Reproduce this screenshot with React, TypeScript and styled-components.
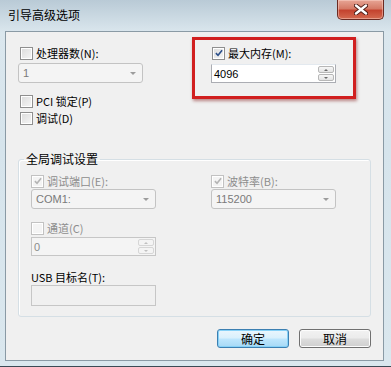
import React from 'react';
import styled, { createGlobalStyle } from 'styled-components';

const GlobalStyle = createGlobalStyle`
  html, body {
    margin: 0;
    padding: 0;
    background: #1d2a33;
  }
  body {
    font-family: "Noto Sans CJK SC", "Liberation Sans", sans-serif;
  }
`;

const cjk = `"Noto Sans CJK SC", "Liberation Sans", sans-serif`;
const latin = `"Liberation Sans", "DejaVu Sans", sans-serif`;

const Window = styled.div`
  position: relative;
  width: 391px;
  height: 367px;
  box-sizing: border-box;
  display: flex;
  flex-direction: column;
  background: linear-gradient(180deg, #b9cad6 0%, #dbe7ee 9%, #d6e4ec 40%, #dae7ee 100%);
  border-bottom: 1px solid #3a4a55;
`;

const TitleBar = styled.div`
  height: 31px;
  display: flex;
  justify-content: space-between;
  align-items: flex-start;
  padding-left: 8px;
  flex-shrink: 0;
`;

const Title = styled.div`
  font-family: ${cjk};
  font-size: 12px;
  line-height: 14px;
  color: #000;
  margin-top: 8px;
`;

const CloseButton = styled.div`
  width: 47px;
  height: 20px;
  margin-right: 7px;
  box-sizing: border-box;
  border: 1px solid #6b2a22;
  border-top: none;
  border-radius: 0 0 5px 5px;
  background: linear-gradient(180deg, #e7a595 0%, #d57a66 45%, #c4432f 55%, #d46a50 100%);
  box-shadow: inset 0 0 0 1px rgba(255, 220, 210, 0.45);
  display: flex;
  align-items: center;
  justify-content: center;
`;

const Client = styled.div`
  position: relative;
  flex: 1;
  margin: 0 7px 5px 5px;
  border: 1px solid #8a9aa5;
  background: #f0f0f0;
  display: flex;
  flex-direction: column;
  padding: 14px 12px 0 12px;
`;

const TopGrid = styled.div`
  display: grid;
  grid-template-columns: 193px 126px;
`;

const Column = styled.div`
  display: flex;
  flex-direction: column;
  align-items: flex-start;
`;

const CheckRow = styled.label<{ $gap?: number; $disabled?: boolean; $indent?: number }>`
  display: flex;
  align-items: center;
  gap: 3px;
  height: 14px;
  margin-top: ${({ $gap }) => $gap ?? 0}px;
  margin-left: ${({ $indent }) => $indent ?? 2}px;
  font-family: ${cjk};
  font-size: 11px;
  color: ${({ $disabled }) => ($disabled ? '#8d8d8d' : '#000')};
  white-space: pre;
`;

const Box = styled.span<{ $disabled?: boolean }>`
  width: 13px;
  height: 13px;
  box-sizing: border-box;
  border: 1px solid ${({ $disabled }) => ($disabled ? '#c2c2c2' : '#8f8f8f')};
  background: ${({ $disabled }) =>
    $disabled ? '#f4f4f4' : 'linear-gradient(135deg, #dcdcdc 0%, #f6f6f6 100%)'};
  box-shadow: inset 0 0 0 1px #fff;
  display: flex;
  align-items: center;
  justify-content: center;
  flex-shrink: 0;
`;

const Combo = styled.div<{ $gap?: number; $disabled?: boolean }>`
  width: 125px;
  height: 20px;
  margin-top: ${({ $gap }) => $gap ?? 0}px;
  box-sizing: border-box;
  border: 1px solid ${({ $disabled }) => ($disabled ? '#c3c3c3' : '#a8a8a8')};
  border-radius: 3px;
  background: ${({ $disabled }) => ($disabled ? '#f4f4f4' : '#fff')};
  display: flex;
  align-items: center;
  justify-content: space-between;
  padding: 0 6px 0 4px;
  font-family: ${latin};
  font-size: 11px;
  color: #7a7a7a;
`;

const Arrow = styled.span`
  width: 0;
  height: 0;
  border-left: 3px solid transparent;
  border-right: 3px solid transparent;
  border-top: 3px solid #9c9c9c;
`;

const Spin = styled.div<{ $gap?: number; $disabled?: boolean }>`
  width: 125px;
  height: 19px;
  margin-top: ${({ $gap }) => $gap ?? 0}px;
  box-sizing: border-box;
  border: 1px solid ${({ $disabled }) => ($disabled ? '#c6c6c6' : '#abadb3')};
  border-top-color: ${({ $disabled }) => ($disabled ? '#c6c6c6' : '#e3e9ef')};
  background: ${({ $disabled }) => ($disabled ? '#f4f4f4' : '#fff')};
  display: flex;
  align-items: stretch;
  font-family: ${latin};
  font-size: 11px;
  color: ${({ $disabled }) => ($disabled ? '#8a8a8a' : '#000')};
`;

const SpinText = styled.div`
  flex: 1;
  display: flex;
  align-items: center;
  padding-left: 2px;
`;

const SpinButtons = styled.div`
  width: 16px;
  display: flex;
  flex-direction: column;
  gap: 1px;
  padding: 1px;
`;

const SpinBtn = styled.div<{ $down?: boolean; $disabled?: boolean }>`
  flex: 1;
  border: 1px solid ${({ $disabled }) => ($disabled ? '#d6d6d6' : '#b7b7b7')};
  border-radius: 2px;
  background: ${({ $disabled }) =>
    $disabled ? '#f4f4f4' : 'linear-gradient(180deg, #f7f7f7 0%, #e3e3e3 100%)'};
  display: flex;
  align-items: center;
  justify-content: center;
  &::after {
    content: '';
    width: 0;
    height: 0;
    border-left: 2px solid transparent;
    border-right: 2px solid transparent;
    ${({ $down, $disabled }) =>
      $down
        ? `border-top: 2px solid ${$disabled ? '#c0c0c0' : '#6a6a6a'};`
        : `border-bottom: 2px solid ${$disabled ? '#c0c0c0' : '#6a6a6a'};`}
  }
`;

const Edit = styled.div<{ $gap?: number }>`
  height: 21px;
  width: 125px;
  margin-top: ${({ $gap }) => $gap ?? 0}px;
  box-sizing: border-box;
  border: 1px solid #c6c6c6;
  background: #f0f0f0;
`;

const Group = styled.fieldset`
  margin: 27px 0 0 0;
  padding: 0 12px 10px 12px;
  border: 1px solid #d5dfe5;
  border-radius: 3px;
  box-shadow: inset 1px 1px 0 #fff;
  min-width: 0;
`;

const Legend = styled.legend`
  margin-left: -7px;
  padding: 0 2px;
  font-family: ${cjk};
  font-size: 12px;
  line-height: 14px;
  color: #000;
`;

const GroupGrid = styled.div`
  display: grid;
  grid-template-columns: 180px 126px;
  margin-top: 8px;
`;

const PlainLabel = styled.div<{ $gap?: number }>`
  height: 14px;
  display: flex;
  align-items: center;
  margin-top: ${({ $gap }) => $gap ?? 0}px;
  font-family: ${cjk};
  font-size: 11px;
  color: #000;
  white-space: pre;
`;

const ButtonRow = styled.div`
  display: flex;
  justify-content: flex-end;
  gap: 10px;
  margin-top: 12px;
`;

const Button = styled.div<{ $primary?: boolean }>`
  width: 72px;
  height: 19px;
  box-sizing: border-box;
  border-radius: 3px;
  border: 1px solid ${({ $primary }) => ($primary ? '#3c7fb1' : '#707070')};
  background: ${({ $primary }) =>
    $primary
      ? 'linear-gradient(180deg, #eaf6fd 0%, #d9f0fc 48%, #bee6fd 52%, #a7d9f5 100%)'
      : 'linear-gradient(180deg, #f2f2f2 0%, #ebebeb 48%, #dddddd 52%, #cfcfcf 100%)'};
  box-shadow: inset 0 0 0 1px ${({ $primary }) => ($primary ? '#86d1f7' : '#fcfcfc')};
  display: flex;
  align-items: center;
  justify-content: center;
  font-family: ${cjk};
  font-size: 12px;
  color: #000;
`;

const Highlight = styled.div`
  position: absolute;
  left: 186px;
  top: 5px;
  width: 164px;
  height: 62px;
  box-sizing: border-box;
  border: 3px solid #d11f1f;
  box-shadow: 1px 2px 3px rgba(120, 0, 0, 0.45);
  pointer-events: none;
`;

const Check = ({ disabled }: { disabled?: boolean }) => (
  <svg width="8" height="8" viewBox="0 0 9 9">
    <path
      d="M1 4.6 L3.4 7 L8 1.5"
      fill="none"
      stroke={disabled ? '#b4b4b4' : '#2c4f8a'}
      strokeWidth="1.8"
    />
  </svg>
);

const CheckBox = ({
  label,
  checked,
  disabled,
  gap,
  indent,
}: {
  label: string;
  checked?: boolean;
  disabled?: boolean;
  gap?: number;
  indent?: number;
}) => (
  <CheckRow $gap={gap} $disabled={disabled} $indent={indent}>
    <Box $disabled={disabled}>{checked && <Check disabled={disabled} />}</Box>
    {label}
  </CheckRow>
);

const SpinBox = ({ value, disabled, gap }: { value: string; disabled?: boolean; gap?: number }) => (
  <Spin $gap={gap} $disabled={disabled}>
    <SpinText>{value}</SpinText>
    <SpinButtons>
      <SpinBtn $disabled={disabled} />
      <SpinBtn $down $disabled={disabled} />
    </SpinButtons>
  </Spin>
);

export default function App() {
  return (
    <>
      <GlobalStyle />
      <Window>
        <TitleBar>
          <Title>引导高级选项</Title>
          <CloseButton>
            <svg width="14" height="11" viewBox="0 0 14 11">
              <path d="M2 1.5 L12 9.5 M12 1.5 L2 9.5" stroke="#4a1a14" strokeWidth="4.2" strokeLinecap="round" />
              <path d="M2 1.5 L12 9.5 M12 1.5 L2 9.5" stroke="#fff" strokeWidth="2.4" strokeLinecap="round" />
            </svg>
          </CloseButton>
        </TitleBar>
        <Client>
          <TopGrid>
            <Column>
              <CheckBox label="处理器数(N):" />
              <Combo $gap={3} $disabled>
                1
                <Arrow />
              </Combo>
              <CheckBox label="PCI 锁定(P)" gap={11} />
              <CheckBox label="调试(D)" gap={3} />
            </Column>
            <Column>
              <CheckBox label="最大内存(M):" checked indent={1} />
              <SpinBox value="4096" gap={4} />
            </Column>
          </TopGrid>

          <Group>
            <Legend>全局调试设置</Legend>
            <GroupGrid>
              <Column>
                <CheckBox label="调试端口(E):" checked disabled indent={0} />
                <Combo $gap={1} $disabled>
                  COM1:
                  <Arrow />
                </Combo>
                <CheckBox label="通道(C)" disabled gap={12} indent={0} />
                <SpinBox value="0" disabled gap={2} />
                <PlainLabel $gap={14}>USB 目标名(T):</PlainLabel>
                <Edit $gap={1} />
              </Column>
              <Column>
                <CheckBox label="波特率(B):" checked disabled indent={0} />
                <Combo $gap={1} $disabled>
                  115200
                  <Arrow />
                </Combo>
              </Column>
            </GroupGrid>
          </Group>

          <ButtonRow>
            <Button $primary>确定</Button>
            <Button>取消</Button>
          </ButtonRow>
          <Highlight />
        </Client>
      </Window>
    </>
  );
}
